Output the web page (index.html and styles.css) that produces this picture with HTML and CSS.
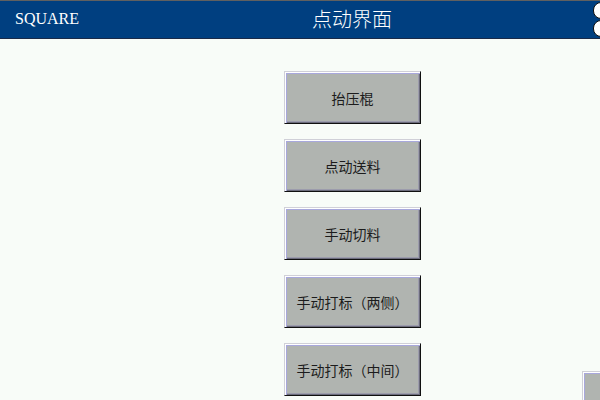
FILE: index.html
```html
<!DOCTYPE html>
<html>
<head>
<meta charset="utf-8">
<link rel="stylesheet" href="styles.css">
</head>
<body>
<div class="header">
  <div class="brand">SQUARE</div>
  <div class="title">点动界面</div>
  <div class="knobs"><div class="knob"></div><div class="knob"></div></div>
</div>
<div class="main">
  <div class="col">
    <div class="btn">抬压棍</div>
    <div class="btn">点动送料</div>
    <div class="btn">手动切料</div>
    <div class="btn">手动打标（两侧）</div>
    <div class="btn">手动打标（中间）</div>
  </div>
  <div class="btn side"></div>
</div>
</body>
</html>
```
FILE: styles.css
```css
html, body {
  margin: 0;
  padding: 0;
  width: 600px;
  height: 400px;
  overflow: hidden;
  background: #f8fcf8;
  font-family: "Noto Sans CJK SC", "Noto Sans", sans-serif;
}
.header {
  height: 37px;
  background: #003f80;
  border-top: 1px solid #606060;
  border-bottom: 1px solid #1a2a48;
  display: flex;
  align-items: center;
  overflow: hidden;
}
.brand {
  width: 257px;
  padding-left: 15px;
  font-family: "Liberation Serif", serif;
  font-size: 16px;
  color: #ffffff;
  line-height: 37px;
  padding-bottom: 2px;
}
.title {
  width: 160px;
  text-align: center;
  color: #ffffff;
  font-size: 20px;
  font-weight: 300;
  line-height: 37px;
  padding-bottom: 2px;
}
.knobs {
  margin-left: auto;
  margin-right: -10px;
  display: flex;
  flex-direction: column;
  gap: 1px;
}
.knob {
  width: 17px;
  height: 17px;
  background: #ffffff;
  border: 1px solid #101010;
  border-radius: 8px;
  box-sizing: border-box;
}
.main {
  display: flex;
  padding-top: 32px;
  height: 329px;
  overflow: hidden;
}
.col {
  margin-left: 284px;
  display: flex;
  flex-direction: column;
  gap: 15px;
}
.btn {
  width: 137px;
  height: 53px;
  box-sizing: border-box;
  background: #b0b4b0;
  border: 1px solid;
  border-color: #d0d0d8 #101010 #101010 #d0d0d8;
  box-shadow: inset 1px 1px 0 #ffffff, inset 2px 2px 0 #a8a8dc, inset -1px -1px 0 #6c6c7c, inset -2px -2px 0 #9c9cac;
  display: flex;
  align-items: center;
  justify-content: center;
  font-size: 14px;
  color: #1c1c1c;
  flex-shrink: 0;
}
.side {
  margin-left: 161px;
  margin-top: 300px;
}
```
